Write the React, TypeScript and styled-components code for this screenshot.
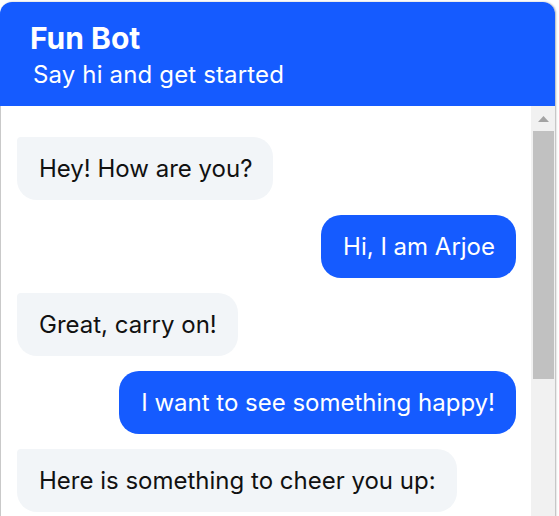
import React from "react";
import styled, { createGlobalStyle } from "styled-components";

const GlobalStyle = createGlobalStyle`
  html, body {
    margin: 0;
    padding: 0;
    overflow: hidden;
    background: #ffffff;
    font-family: Inter, "Noto Sans", Arial, sans-serif;
  }
`;

const Page = styled.div`
  padding: 2px 3px 0 0;
`;

const Widget = styled.div`
  width: 555px;
  height: 620px;
  display: flex;
  flex-direction: column;
  border-radius: 12px 12px 0 0;
  overflow: hidden;
  background: #ffffff;
  box-shadow: 1px 0 2px rgba(0, 0, 0, 0.3);
`;

const Header = styled.header`
  flex: none;
  display: flex;
  flex-direction: column;
  gap: 4px;
  padding: 18px 30px 17px;
  background: #155bff;
  color: #ffffff;
`;

const Title = styled.h1`
  margin: 0;
  font-size: 30px;
  line-height: 36px;
  font-weight: 700;
`;

const Subtitle = styled.p`
  margin: 0 0 0 3px;
  font-size: 24px;
  line-height: 29px;
  font-weight: 400;
  letter-spacing: 0.15px;
`;

const Body = styled.div`
  flex: 1;
  min-height: 0;
  display: flex;
  border-left: 1px solid #c9c9c9;
`;

const Messages = styled.div`
  flex: 1;
  min-width: 0;
  overflow: hidden;
`;

const List = styled.div`
  display: flex;
  flex-direction: column;
  gap: 15px;
  padding: 31px 15px 30px 16px;
`;

const Bubble = styled.div<{ $mine?: boolean }>`
  align-self: ${(p) => (p.$mine ? "flex-end" : "flex-start")};
  max-width: 85%;
  padding: 17px 21px 17px 22px;
  border-radius: ${(p) => (p.$mine ? "20px" : "4px 20px 20px 20px")};
  background: ${(p) => (p.$mine ? "#155bff" : "#f2f5f8")};
  color: ${(p) => (p.$mine ? "#ffffff" : "#111111")};
  font-size: 24px;
  line-height: 29px;
  white-space: nowrap;
`;

const ScrollTrack = styled.div`
  flex: none;
  width: 24px;
  display: flex;
  flex-direction: column;
  background: #f1f1f1;
`;

const ScrollButton = styled.div`
  flex: none;
  height: 25px;
  display: flex;
  align-items: center;
  justify-content: center;
  padding-left: 1px;
`;

const ScrollThumb = styled.div`
  flex: none;
  height: 248px;
  margin: 0 1px 0 2px;
  background: #c1c1c1;
`;

type Message = { text: string; mine?: boolean };

const messages: Message[] = [
  { text: "Hey! How are you?" },
  { text: "Hi, I am Arjoe", mine: true },
  { text: "Great, carry on!" },
  { text: "I want to see something happy!", mine: true },
  { text: "Here is something to cheer you up:" },
];

export default function App() {
  return (
    <>
      <GlobalStyle />
      <Page>
        <Widget>
          <Header>
            <Title>Fun Bot</Title>
            <Subtitle>Say hi and get started</Subtitle>
          </Header>
          <Body>
            <Messages>
              <List>
                {messages.map((m, i) => (
                  <Bubble key={i} $mine={m.mine}>
                    {m.text}
                  </Bubble>
                ))}
              </List>
            </Messages>
            <ScrollTrack>
              <ScrollButton>
                <svg width="11" height="6" viewBox="0 0 11 6">
                  <path d="M5.5 0 L11 6 L0 6 Z" fill="#a3a3a3" />
                </svg>
              </ScrollButton>
              <ScrollThumb />
            </ScrollTrack>
          </Body>
        </Widget>
      </Page>
    </>
  );
}
